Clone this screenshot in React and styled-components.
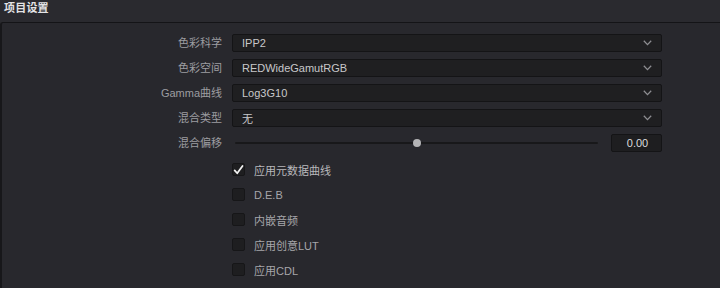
import React from 'react'
import styled, { createGlobalStyle } from 'styled-components'

const Global = createGlobalStyle`
  html, body {
    margin: 0;
    padding: 0;
    background: #28282d;
    overflow: hidden;
  }
  body {
    font-family: "Liberation Sans", "Noto Sans CJK SC", sans-serif;
    font-size: 11px;
  }
`

const Page = styled.div`
  width: 720px;
  height: 288px;
  display: flex;
  flex-direction: column;
  background: #2a2a2f;
`

const Header = styled.div`
  height: 22px;
  padding: 2px 0 0 4px;
  box-sizing: border-box;
  color: #e4e4e6;
  font-weight: bold;
  font-size: 11px;
  line-height: 13px;
  letter-spacing: 0.2px;
`

const Panel = styled.div`
  flex: 1;
  background: #28282d;
  border-top: 1px solid #141417;
  border-left: 2px solid #17171a;
  border-top-left-radius: 3px;
  padding: 11px 0 0 0;
  display: grid;
  grid-template-columns: 220px 430px;
  column-gap: 10px;
  row-gap: 7px;
  align-content: start;
`

const Label = styled.div`
  text-align: right;
  color: #9d9da1;
  height: 18px;
  line-height: 18px;
  white-space: nowrap;
`

const Select = styled.div`
  height: 18px;
  box-sizing: border-box;
  background: #1f1f21;
  border: 1px solid #141416;
  border-radius: 2px;
  display: flex;
  align-items: center;
  justify-content: space-between;
  padding: 0 9px 0 9px;
  color: #c8c8ca;
`

const SliderRow = styled.div`
  display: flex;
  align-items: center;
  gap: 13px;
  height: 18px;
`

const Track = styled.div`
  flex: 1;
  height: 2px;
  margin-left: 3px;
  background: #18181a;
  border-radius: 1px;
  position: relative;
`

const Knob = styled.div`
  position: absolute;
  top: -3px;
  width: 8px;
  height: 8px;
  margin-left: -4px;
  border-radius: 50%;
  background: #b4b4b6;
`

const ValueBox = styled.div`
  width: 51px;
  height: 18px;
  box-sizing: border-box;
  background: #1e1e20;
  border: 1px solid #141416;
  border-radius: 2px;
  color: #dcdcde;
  text-align: center;
  line-height: 16px;
  padding-left: 2px;
`

const Checks = styled.div`
  grid-column: 2;
  display: flex;
  flex-direction: column;
  margin-top: -2px;
`

const CheckRow = styled.div`
  height: 25px;
  display: flex;
  align-items: center;
  gap: 9px;
  color: ${p => (p.$on ? '#b8b8bc' : '#a6a6aa')};
`

const Box = styled.div`
  width: 13px;
  height: 13px;
  box-sizing: border-box;
  background: #1e1e20;
  border: 1px solid #161618;
  border-radius: 2px;
  display: flex;
  align-items: center;
  justify-content: center;
`

const Chevron = () => (
  <svg width="9" height="6" viewBox="0 0 9 6">
    <polyline points="0.8,0.8 4.5,4.6 8.2,0.8" fill="none" stroke="#8e8e92" strokeWidth="1.3" />
  </svg>
)

const Check = () => (
  <svg width="12" height="12" viewBox="0 0 12 12">
    <polyline points="1.8,6.4 4.6,9.6 10.4,1.6" fill="none" stroke="#f2f2f2" strokeWidth="1.9" strokeLinecap="round" strokeLinejoin="round" />
  </svg>
)

const selects = [
  ['色彩科学', 'IPP2'],
  ['色彩空间', 'REDWideGamutRGB'],
  ['Gamma曲线', 'Log3G10'],
  ['混合类型', '无'],
]

const checks = [
  ['应用元数据曲线', true],
  ['D.E.B', false],
  ['内嵌音频', false],
  ['应用创意LUT', false],
  ['应用CDL', false],
]

export default function App() {
  return (
    <Page>
      <Global />
      <Header>项目设置</Header>
      <Panel>
        {selects.map(([label, value]) => (
          <React.Fragment key={label}>
            <Label>{label}</Label>
            <Select>
              <span>{value}</span>
              <Chevron />
            </Select>
          </React.Fragment>
        ))}
        <Label>混合偏移</Label>
        <SliderRow>
          <Track>
            <Knob style={{ left: '50%' }} />
          </Track>
          <ValueBox>0.00</ValueBox>
        </SliderRow>
        <Checks>
          {checks.map(([label, on]) => (
            <CheckRow key={label} $on={on}>
              <Box>{on && <Check />}</Box>
              <span>{label}</span>
            </CheckRow>
          ))}
        </Checks>
      </Panel>
    </Page>
  )
}
